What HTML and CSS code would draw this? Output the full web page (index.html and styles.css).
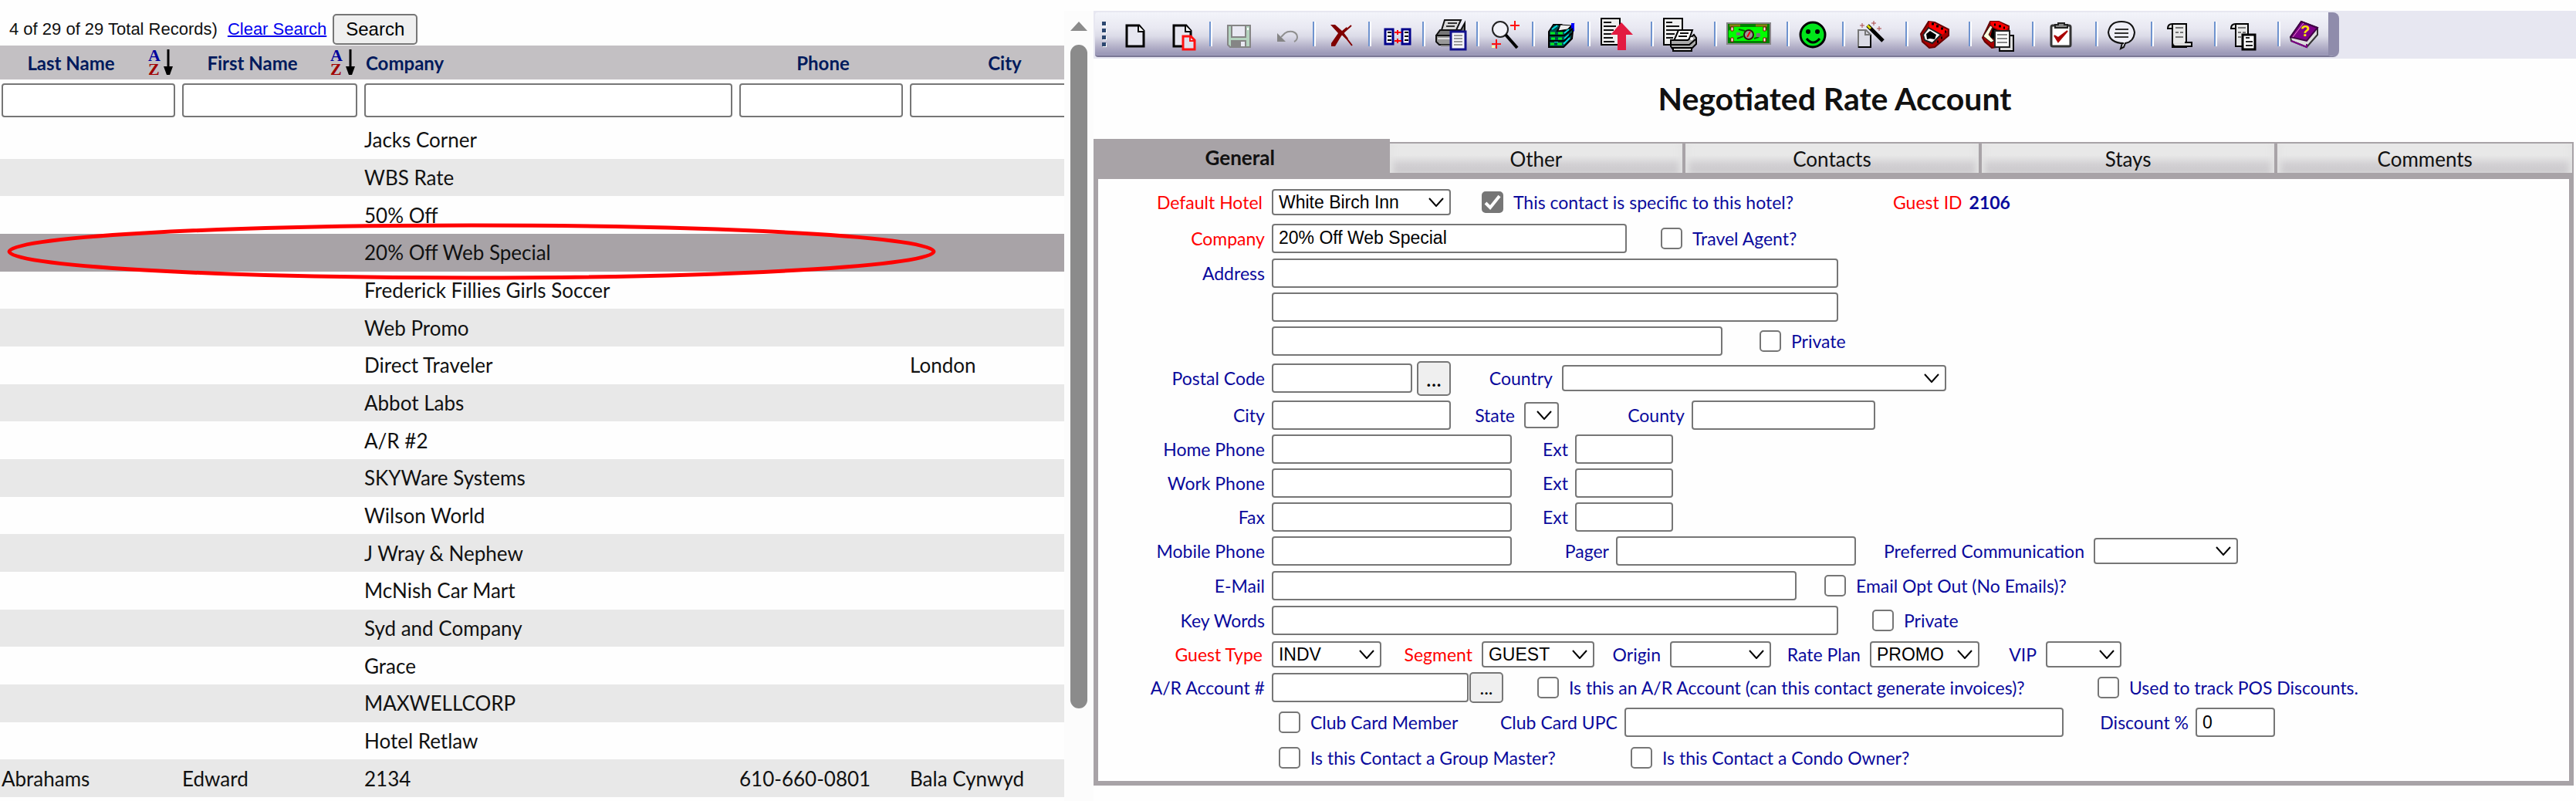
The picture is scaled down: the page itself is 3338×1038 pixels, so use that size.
FILE: index.html
```html
<!DOCTYPE html>
<html lang="en">
<head>
  <meta charset="UTF-8">
  <title>Negotiated Rate Account</title>
  <link rel="stylesheet" href="styles.css">
</head>
<body>

<!-- Search Results List -->
<section class="list-panel">
  <div class="list-main">
    <div class="list-top">
      <span>4 of 29 of 29 Total Records)</span>
      <a href="#">Clear Search</a>
      <button type="button" class="search-btn">Search</button>
    </div>
    <table class="results">
      <colgroup><col class="c-last"><col class="c-first"><col class="c-company"><col class="c-phone"><col class="c-city"></colgroup>
      <thead>
        <tr class="heads">
          <th><div class="sortable"><span>Last Name</span>
            <svg width="32" height="40" viewBox="0 -2 32 40"><text x="0" y="16" class="sort-letter sort-a">A</text><text x="0" y="34" class="sort-letter sort-z">Z</text><path d="M26 1v24" stroke="#000" stroke-width="3"/><path d="M20 23h12l-4 11h-4z"/></svg></div></th>
          <th><div class="sortable"><span>First Name</span>
            <svg width="32" height="40" viewBox="0 -2 32 40"><text x="0" y="16" class="sort-letter sort-a">A</text><text x="0" y="34" class="sort-letter sort-z">Z</text><path d="M26 1v24" stroke="#000" stroke-width="3"/><path d="M20 23h12l-4 11h-4z"/></svg></div></th>
          <th class="left">Company</th>
          <th>Phone</th>
          <th>City</th>
        </tr>
        <tr class="filters">
          <td><input type="text" aria-label="Filter last name"></td>
          <td><input type="text" aria-label="Filter first name"></td>
          <td><input type="text" aria-label="Filter company"></td>
          <td><input type="text" aria-label="Filter phone"></td>
          <td><input type="text" aria-label="Filter city"></td>
        </tr>
      </thead>
      <tbody>
        <tr><td></td><td></td><td>Jacks Corner</td><td></td><td></td></tr>
        <tr><td></td><td></td><td>WBS Rate</td><td></td><td></td></tr>
        <tr><td></td><td></td><td>50% Off</td><td></td><td></td></tr>
        <tr class="selected">
          <td class="marker-cell"><svg class="marker" width="1204" height="74" viewBox="0 0 1204 74"><ellipse cx="602" cy="37" rx="599" ry="34" fill="none" stroke="#f00" stroke-width="5"/></svg></td>
          <td></td><td>20% Off Web Special</td><td></td><td></td>
        </tr>
        <tr><td></td><td></td><td>Frederick Fillies Girls Soccer</td><td></td><td></td></tr>
        <tr><td></td><td></td><td>Web Promo</td><td></td><td></td></tr>
        <tr><td></td><td></td><td>Direct Traveler</td><td></td><td>London</td></tr>
        <tr><td></td><td></td><td>Abbot Labs</td><td></td><td></td></tr>
        <tr><td></td><td></td><td>A/R #2</td><td></td><td></td></tr>
        <tr><td></td><td></td><td>SKYWare Systems</td><td></td><td></td></tr>
        <tr><td></td><td></td><td>Wilson World</td><td></td><td></td></tr>
        <tr><td></td><td></td><td>J Wray &amp; Nephew</td><td></td><td></td></tr>
        <tr><td></td><td></td><td>McNish Car Mart</td><td></td><td></td></tr>
        <tr><td></td><td></td><td>Syd and Company</td><td></td><td></td></tr>
        <tr><td></td><td></td><td>Grace</td><td></td><td></td></tr>
        <tr><td></td><td></td><td>MAXWELLCORP</td><td></td><td></td></tr>
        <tr><td></td><td></td><td>Hotel Retlaw</td><td></td><td></td></tr>
        <tr><td>Abrahams</td><td>Edward</td><td>2134</td><td>610-660-0801</td><td>Bala Cynwyd</td></tr>
      </tbody>
    </table>
  </div>
  <div class="scrollbar">
    <div class="scroll-up"></div>
    <div class="scroll-thumb"></div>
  </div>
</section>

<!-- Contact Details -->
<main class="detail">

  <div class="toolbar-wrap">
    <div class="toolbar">
      <div class="grip"><i></i><i></i><i></i><i></i></div>
      <button type="button" class="tool" aria-label="New">
        <svg width="44" height="58" viewBox="0 0 44 58"><path d="M11 17h16l6 7v20H11z" fill="#e6e6f0" stroke="#000" stroke-width="3"/><path d="M26 17v8h8" fill="#fff" stroke="#000" stroke-width="2"/></svg>
      </button>
      <button type="button" class="tool narrow" aria-label="New copy">
        <svg width="44" height="58" viewBox="0 0 44 58"><path d="M8 17h16l6 7v20H8z" fill="#e6e6f0" stroke="#000" stroke-width="3"/><path d="M23 17v8h8" fill="#fff" stroke="#000" stroke-width="2"/><path d="M20 31h10l5 5v12H20z" fill="#e0e0ec" stroke="#f11" stroke-width="3"/><path d="M29 31v6h6" fill="none" stroke="#f11" stroke-width="2"/></svg>
      </button>
      <span class="sep"></span>
      <button type="button" class="tool" aria-label="Save" disabled>
        <svg width="44" height="58" viewBox="0 0 44 58"><path d="M8 17h29v28H11l-3-3z" fill="#b4d4bf" stroke="#858585" stroke-width="2"/><path d="M13 17h18v15H13z" fill="#e9e9f3" stroke="#858585" stroke-width="2"/><path d="M12 36h20v9H12z" fill="#858585"/><path d="M25 38h5v6h-5z" fill="#e9e9f3"/><path d="M33 20h2v3h-2z" fill="#fff"/></svg>
      </button>
      <button type="button" class="tool narrow" aria-label="Undo" disabled>
        <svg width="44" height="58" viewBox="0 0 44 58"><path d="M8 27v11h11z" fill="#858585"/><path d="M13 32l5-5q4-3 10-2q6 2 6 7q0 4-4 6" fill="none" stroke="#8f8f8f" stroke-width="2"/></svg>
      </button>
      <span class="sep"></span>
      <button type="button" class="tool short" aria-label="Delete">
        <svg width="44" height="58" viewBox="0 0 44 58"><path d="M10 17l9 8 9 9 7 9M34 17l-9 8-9 9-6 9" fill="none" stroke="#800000" stroke-width="2"/><path d="M7 16h6l9 8 6-5 1 2-5 5 6 8-2 1-6-6-9 15H8v-4l9-13z" fill="#800000"/></svg>
      </button>
      <span class="sep"></span>
      <button type="button" class="tool narrow" aria-label="Merge">
        <svg width="44" height="58" viewBox="0 0 44 58"><g fill="#fff" stroke="#00008b" stroke-width="3"><path d="M6 22h10v19H6zM28 22h10v19H28z"/></g><path d="M9 26h5M9 31h5M9 36h5M31 26h5M31 31h5M31 36h5" stroke="#000" stroke-width="2"/><path d="M18 26h9M22 23v6M18 37h9M22 34v6" stroke="#f00" stroke-width="2"/></svg>
      </button>
      <span class="sep"></span>
      <button type="button" class="tool narrow" aria-label="Print list">
        <svg width="44" height="58" viewBox="0 0 44 58"><path d="M13 10h21l-6 13H9z" fill="#d8d8d8" stroke="#111" stroke-width="2"/><path d="M17 14h12M15 18h11" stroke="#333" stroke-width="2"/><path d="M2 30l5-7h27l5-9v16l-8 7H2z" fill="#777" stroke="#111" stroke-width="2"/><path d="M2 30h20v12H6l-4-4z" fill="#999" stroke="#111" stroke-width="2"/><path d="M4 34h16" stroke="#ddd" stroke-width="2"/><path d="M8 43h14" stroke="#777" stroke-width="2"/><path d="M21 25h19v23H21z" fill="#f4f4f8" stroke="#12128c" stroke-width="3"/><path d="M25 30h11M25 34h11M25 38h11M25 42h11" stroke="#999" stroke-width="2"/></svg>
      </button>
      <span class="sep"></span>
      <button type="button" class="tool short" aria-label="Find">
        <svg width="44" height="58" viewBox="0 0 44 58"><circle cx="15" cy="22" r="10" fill="#f2f2f8" stroke="#222" stroke-width="2"/><path d="M22 29l15 17" stroke="#000" stroke-width="4"/><path d="M28 17h12M34 11v12M4 41h12M10 35v12" stroke="#f11" stroke-width="2"/><path d="M4 43h4v3H4z" fill="#ffa"/></svg>
      </button>
      <span class="sep"></span>
      <button type="button" class="tool short" aria-label="Accounts">
        <svg width="44" height="58" viewBox="0 0 44 58"><path d="M6 25l6-9h10l-5 8h12l9-8-2 18-11 11H6z" fill="#004d4d" stroke="#000" stroke-width="2"/><path d="M21 16l14 1-5 5-12 2z" fill="#eee" stroke="#000"/><path d="M35 14h4v11l-4-4z" fill="#00f"/><path d="M8 27h6M18 27h6M9 34h5M18 34h5M8 41h5M17 41h6" stroke="#0e2" stroke-width="3"/><path d="M10 22l7-5M26 27l6-5M26 34l6-5M25 41l8-8M14 30h4M13 38h5" stroke="#0dd" stroke-width="2"/><path d="M6 30h20l11-9M6 37h20l10-10" fill="none" stroke="#000" stroke-width="2"/></svg>
      </button>
      <span class="sep"></span>
      <button type="button" class="tool" aria-label="Post up">
        <svg width="44" height="58" viewBox="0 0 44 58"><path d="M2 8h24v34H2z" fill="#eee" stroke="#000" stroke-width="2"/><path d="M5 13h10M5 18h16M5 23h13M5 28h10M5 33h12M5 38h14" stroke="#111" stroke-width="2"/><path d="M28 13l15 16h-9v20H23V29h-9z" fill="#e31b41"/></svg>
      </button>
      <span class="sep"></span>
      <button type="button" class="tool" aria-label="Print">
        <svg width="44" height="58" viewBox="0 0 44 58"><path d="M1 8h24v34H1z" fill="#eee" stroke="#000" stroke-width="2"/><path d="M4 13h8M4 18h17M4 23h15M4 28h11M4 33h9" stroke="#111" stroke-width="2"/><path d="M20 23h18l-5 14H14z" fill="#fff" stroke="#000" stroke-width="2"/><path d="M22 27h11M20 31h11" stroke="#111" stroke-width="2"/><path d="M10 36h22l8-7 3 4v8l-6 6H12l-2-3z" fill="#aaa" stroke="#000" stroke-width="2"/><path d="M10 42h24l8-7" fill="none" stroke="#000" stroke-width="2"/><path d="M13 46h24v4H13z" fill="#ccc" stroke="#000" stroke-width="2"/><circle cx="37" cy="34" r="2" fill="#fff"/></svg>
      </button>
      <span class="sep"></span>
      <button type="button" class="tool money" aria-label="Payments">
        <svg width="58" height="58" viewBox="0 0 58 58"><path d="M1 14h56v27H1z" fill="#008000" stroke="#888" stroke-width="2"/><path d="M4 17h14M38 17h15" stroke="#8a7a10" stroke-width="3"/><path d="M10 19h37v18H10l-7-5v-8z" fill="#0f0"/><path d="M47 19l6 5v8l-6 5z" fill="#0f0"/><path d="M6 19h3v5H6zM48 19h3v5h-3zM6 33h3v5H6zM48 33h3v5h-3z" fill="#fff" stroke="#900"/><path d="M16 22l8 2M14 34l8-3M36 34l6-2" stroke="#060" stroke-width="2"/><path d="M13 26h5v4h-5zM39 27h5v5h-5z" fill="#777"/><circle cx="29" cy="29" r="6" fill="#999" stroke="#311" stroke-width="2"/><path d="M27 32l4-7" stroke="#e00" stroke-width="2"/></svg>
      </button>
      <span class="sep"></span>
      <button type="button" class="tool short" aria-label="Guest satisfaction">
        <svg width="44" height="58" viewBox="0 0 44 58"><circle cx="18" cy="29" r="16" fill="#00e51a" stroke="#000" stroke-width="3"/><circle cx="12" cy="25" r="3"/><circle cx="24" cy="25" r="3"/><path d="M10 34q8 10 17 0" fill="none" stroke="#000" stroke-width="3"/></svg>
      </button>
      <span class="sep"></span>
      <button type="button" class="tool" aria-label="Wizard">
        <svg width="44" height="58" viewBox="0 0 44 58"><path d="M5 23h10l6 6v16H5z" fill="#dcdce6" stroke="#777" stroke-width="2"/><path d="M5 45h16V29" fill="none" stroke="#000" stroke-width="2"/><path d="M14 23v6h7" fill="none" stroke="#777" stroke-width="2"/><path d="M17 17l20 20" stroke="#000" stroke-width="5"/><path d="M17 17l4 4" stroke="#dd0" stroke-width="3"/><path d="M10 14v6M7 17h6M25 11v6M22 14h6M32 18v6M29 21h6" stroke="#a44" stroke-width="1"/></svg>
      </button>
      <span class="sep"></span>
      <button type="button" class="tool" aria-label="Phone">
        <svg width="44" height="58" viewBox="0 0 44 58"><path d="M4 28L14 12l8 1 18 9v8L22 45l-7 1L6 38z" fill="#a00" stroke="#600" stroke-width="2"/><path d="M15 12l7 2 17 9-7 6-17-9z" fill="#f00"/><path d="M7 29l7-9 16 9-11 11-10-4z" fill="#fff" stroke="#222" stroke-width="2"/><path d="M11 28l5-4 8 5-2 6-6-1-4 1z"/><path d="M18 15h3M24 18h3M30 21h3M35 25h2M30 33h2M25 38h2" stroke="#000" stroke-width="3"/></svg>
      </button>
      <span class="sep"></span>
      <button type="button" class="tool" aria-label="Phone log">
        <svg width="44" height="58" viewBox="0 0 44 58"><path d="M2 33l10-21h11l13 6v8L20 45l-6 1-9-8z" fill="#a00" stroke="#600" stroke-width="2"/><path d="M12 12h11l13 7-6 6-16-7z" fill="#f00"/><path d="M3 31l9-14 3 2-5 10 7 8-4 2z" fill="#ffd" stroke="#222"/><path d="M15 20l6 3v14l-9-5z"/><path d="M17 16h2M23 18h3M29 20h2" stroke="#000" stroke-width="3"/><path d="M24 30h18v20H24z" fill="#ddd" stroke="#000" stroke-width="2"/><path d="M18 24h19v21H18z" fill="#fff" stroke="#222" stroke-width="2"/><path d="M21 29h13M21 34h13M21 39h13" stroke="#888" stroke-width="2"/></svg>
      </button>
      <span class="sep"></span>
      <button type="button" class="tool" aria-label="Tasks">
        <svg width="44" height="58" viewBox="0 0 44 58"><rect x="9" y="17" width="25" height="27" rx="2" fill="#fff" stroke="#333" stroke-width="3"/><path d="M18 14h8v2h4v4H14v-4h4z" fill="#888" stroke="#222" stroke-width="2"/><path d="M13 30l5 8 12-14-12 9z" fill="#a00" stroke="#a00" stroke-width="2"/></svg>
      </button>
      <span class="sep"></span>
      <button type="button" class="tool short" aria-label="Comments">
        <svg width="44" height="58" viewBox="0 0 44 58"><path d="M21 40q-18 0-20-14Q3 12 18 12t17 14q-1 12-12 14l-2 5-4 2 2-7" fill="#eeeef6" stroke="#111" stroke-width="2"/><path d="M10 22h17M9 27h18M9 32h18" stroke="#333" stroke-width="2"/></svg>
      </button>
      <span class="sep"></span>
      <button type="button" class="tool" aria-label="Script">
        <svg width="44" height="58" viewBox="0 0 44 58"><path d="M12 15q-6 0-6 6h6v24h18V15z" fill="#e8e8e8" stroke="#000" stroke-width="2"/><path d="M28 39h9v5H16q-3 0-4-4" fill="#ddd" stroke="#000" stroke-width="2"/><path d="M12 15v7" stroke="#000" stroke-width="2"/><path d="M16 20h10M16 26h4M22 26h4M16 32h10" stroke="#777" stroke-width="2"/></svg>
      </button>
      <span class="sep"></span>
      <button type="button" class="tool" aria-label="Script copy">
        <svg width="44" height="58" viewBox="0 0 44 58"><path d="M12 15q-6 0-6 6h6v23h16V15z" fill="#e8e8e8" stroke="#000" stroke-width="2"/><path d="M12 15v7" stroke="#000" stroke-width="2"/><path d="M15 20h10M15 26h4M21 26h4M15 32h4" stroke="#777" stroke-width="2"/><path d="M21 29h16v19H21z" fill="#fff" stroke="#000" stroke-width="3"/><path d="M25 33h5M25 38h9M25 43h9" stroke="#222" stroke-width="2"/></svg>
      </button>
      <span class="sep"></span>
      <button type="button" class="tool last" aria-label="Help">
        <svg width="44" height="58" viewBox="0 0 44 58"><path d="M1 32L15 12l21 8v9L22 45 2 37z" fill="#ddd" stroke="#333" stroke-width="2"/><path d="M1 32L15 12l21 8-14 17z" fill="#7d0087" stroke="#400045" stroke-width="2"/><path d="M4 32l14-18" stroke="#e8c" stroke-width="1"/><path d="M2 37l20 8v-4" fill="none" stroke="#7d0087" stroke-width="2"/><text x="14" y="31" class="help-mark">?</text></svg>
      </button>
    </div>
  </div>

  <h1>Negotiated Rate Account</h1>

  <nav class="tabs">
    <button type="button" class="active">General</button>
    <button type="button">Other</button>
    <button type="button">Contacts</button>
    <button type="button">Stays</button>
    <button type="button">Comments</button>
  </nav>

  <form class="panel">
    <div class="row tall">
      <label class="first required pad" for="hotel">Default Hotel</label>
      <select id="hotel" class="w-232"><option>White Birch Inn</option></select>
      <input type="checkbox" id="specific" class="gap-40" checked><label for="specific" class="check-label w-505">This contact is specific to this hotel?</label>
      <span class="required">Guest ID</span><strong>2106</strong>
    </div>
    <div class="row tall">
      <label class="first required" for="company">Company</label>
      <input type="text" id="company" class="w-460" value="20% Off Web Special">
      <input type="checkbox" id="agent" class="gap-44"><label for="agent" class="check-label">Travel Agent?</label>
    </div>
    <div class="row">
      <label class="first" for="address1">Address</label>
      <input type="text" id="address1" class="w-734">
    </div>
    <div class="row">
      <span class="first"></span>
      <input type="text" aria-label="Address line 2" class="w-734">
    </div>
    <div class="row">
      <span class="first"></span>
      <input type="text" aria-label="Address line 3" class="w-584">
      <input type="checkbox" id="private1" class="gap-48"><label for="private1" class="check-label">Private</label>
    </div>
    <div class="row postal">
      <label class="first" for="postal">Postal Code</label>
      <input type="text" id="postal" class="w-182">
      <button type="button" class="more big">...</button>
      <label class="l-144 pad" for="country">Country</label>
      <select id="country" class="w-498"></select>
    </div>
    <div class="row">
      <label class="first" for="city">City</label>
      <input type="text" id="city" class="w-232">
      <label class="l-95 pad" for="state">State</label>
      <select id="state" class="w-45"></select>
      <label class="l-172" for="county">County</label>
      <input type="text" id="county" class="w-238">
    </div>
    <div class="row">
      <label class="first" for="home">Home Phone</label>
      <input type="text" id="home" class="w-311">
      <label class="l-82" for="ext1">Ext</label>
      <input type="text" id="ext1" class="w-127">
    </div>
    <div class="row">
      <label class="first" for="work">Work Phone</label>
      <input type="text" id="work" class="w-311">
      <label class="l-82" for="ext2">Ext</label>
      <input type="text" id="ext2" class="w-127">
    </div>
    <div class="row">
      <label class="first" for="fax">Fax</label>
      <input type="text" id="fax" class="w-311">
      <label class="l-82" for="ext3">Ext</label>
      <input type="text" id="ext3" class="w-127">
    </div>
    <div class="row tight">
      <label class="first" for="mobile">Mobile Phone</label>
      <input type="text" id="mobile" class="w-311">
      <label class="l-135" for="pager">Pager</label>
      <input type="text" id="pager" class="w-311">
      <label class="l-308 pad" for="preferred">Preferred Communication</label>
      <select id="preferred" class="w-187"></select>
    </div>
    <div class="row tall">
      <label class="first" for="email">E-Mail</label>
      <input type="text" id="email" class="w-680">
      <input type="checkbox" id="optout" class="gap-36"><label for="optout" class="check-label">Email Opt Out (No Emails)?</label>
    </div>
    <div class="row">
      <label class="first" for="keywords">Key Words</label>
      <input type="text" id="keywords" class="w-734">
      <input type="checkbox" id="private2" class="gap-44"><label for="private2" class="check-label">Private</label>
    </div>
    <div class="row tight">
      <label class="first required pad" for="guesttype">Guest Type</label>
      <select id="guesttype" class="w-142"><option>INDV</option></select>
      <label class="l-130 required pad" for="segment">Segment</label>
      <select id="segment" class="w-146"><option>GUEST</option></select>
      <label class="l-98 pad" for="origin">Origin</label>
      <select id="origin" class="w-131"></select>
      <label class="l-128 pad" for="rateplan">Rate Plan</label>
      <select id="rateplan" class="w-142"><option>PROMO</option></select>
      <label class="l-86 pad" for="vip">VIP</label>
      <select id="vip" class="w-98"></select>
    </div>
    <div class="row tight">
      <label class="first" for="araccount">A/R Account #</label>
      <input type="text" id="araccount" class="w-255">
      <button type="button" class="more">...</button>
      <input type="checkbox" id="isar" class="gap-44"><label for="isar" class="check-label w-698">Is this an A/R Account (can this contact generate invoices)?</label>
      <input type="checkbox" id="pos"><label for="pos" class="check-label">Used to track POS Discounts.</label>
    </div>
    <div class="row upc">
      <span class="first"></span>
      <input type="checkbox" id="club" class="gap-9"><label for="club" class="check-label w-238">Club Card Member</label>
      <label class="l-182" for="upc">Club Card UPC</label>
      <input type="text" id="upc" class="w-569">
      <label class="l-171" for="discount">Discount %</label>
      <input type="text" id="discount" class="w-103" value="0">
    </div>
    <div class="row">
      <span class="first"></span>
      <input type="checkbox" id="master" class="gap-9"><label for="master" class="check-label w-428">Is this Contact a Group Master?</label>
      <input type="checkbox" id="condo"><label for="condo" class="check-label">Is this Contact a Condo Owner?</label>
    </div>
  </form>

</main>

</body>
</html>
```
FILE: styles.css
```css
* { box-sizing: border-box; margin: 0; padding: 0; }
body { display: flex; min-height: 100vh; overflow: hidden; background: #fefefe; color: #111; font-family: Lato, "Liberation Sans", sans-serif; font-size: 26px; }
svg { display: block; }
button { font-family: inherit; cursor: pointer; }

input[type="text"], select {
  height: 38px; flex: none; padding: 0 7px; background-color: #fff;
  border: 2px solid #767676; border-radius: 4px;
  font-family: "Liberation Sans", Arial, sans-serif; font-size: 23px; color: #000;
}
select {
  height: 34px; appearance: none;
  background-image: url('data:image/svg+xml,<svg xmlns="http://www.w3.org/2000/svg" width="20" height="12"><path d="M1 1l9 10 9-10" fill="none" stroke="black" stroke-width="2"/></svg>');
  background-repeat: no-repeat; background-position: right 7px center;
}
input[type="checkbox"] {
  appearance: none; width: 28px; height: 28px; flex: none;
  background: #fff; border: 2px solid #767676; border-radius: 5px;
}
input[type="checkbox"]:checked {
  background: #767676 url('data:image/svg+xml,<svg xmlns="http://www.w3.org/2000/svg" width="24" height="24"><path d="M3 13l6 6L21 4" fill="none" stroke="white" stroke-width="4"/></svg>') center no-repeat;
}

/* Left list */
.list-panel { display: flex; width: 42.45%; flex: none; }
.list-main { flex: 1; min-width: 0; overflow: hidden; }
.list-top { display: flex; align-items: center; height: 59px; padding: 17px 0 0 12px; font-family: "Liberation Sans", Arial, sans-serif; font-size: 22px; }
.list-top a { margin-left: 13px; color: #00e; text-decoration-thickness: 2px; }
.search-btn { height: 40px; margin-left: 8px; padding: 0 15px; background: #efefef; border: 2px solid #767676; border-radius: 5px; font-size: 24px; }

.results { width: 1427px; height: calc(100vh - 64px); table-layout: fixed; border-collapse: collapse; }
.c-last { width: 234px; }
.c-first { width: 236px; }
.c-company { width: 486px; }
.c-phone { width: 221px; }
.c-city { width: 250px; }
.heads { height: 44px; background: #c3c0c3; }
.filters { height: 54px; }
th { color: #001a5c; font-size: 24px; font-weight: bold; }
th.left { text-align: left; padding-left: 4px; }
.sortable { display: flex; align-items: center; }
.sortable span { flex: 1; }
.sortable svg { margin: 0 10px 0 8px; overflow: visible; }
.sort-letter { font: bold 22px "Liberation Serif", serif; }
.sort-a { fill: #00009c; }
.sort-z { fill: #a00000; }
.filters input { display: block; width: 100%; height: 44px; }
.filters td { padding: 0 7px 0 2px; }
tbody tr { height: 48px; }
tbody td { padding-left: 2px; white-space: nowrap; }
tbody tr:nth-child(even) { background: #e8e8e8; }
tbody tr.selected { background: #a8a3a7; }
.marker-cell { position: relative; }
.marker { position: absolute; z-index: 2; left: 9px; top: -14px; }

.scrollbar { width: 38px; margin-top: 14px; background: #fcfcfc; }
.scroll-up { width: 0; height: 0; margin: 14px 8px 18px; border: 11px solid transparent; border-top: 0; border-bottom: 12px solid #8b8b8b; }
.scroll-thumb { width: 22px; height: 84%; margin-left: 8px; border-radius: 11px; background: #8b8b8b; }

/* Right side */
.detail { flex: 1; min-width: 0; padding-top: 14px; }
.toolbar-wrap { display: flex; padding: 2px; background: #e7e7f1; }
.toolbar {
  display: flex; align-items: center; height: 58px;
  background: linear-gradient(#f3f4fa, #e9e9f2 35%, #dcdce8 55%, #b3b0c8 80%, #9c99b8 95%);
  border-right: 14px solid #8f8cab; border-bottom: 2px solid #7a7795; border-radius: 4px 8px 8px 4px;
}
.grip { display: flex; flex-direction: column; gap: 4px; width: 18px; padding-left: 9px; }
.grip i { width: 5px; height: 5px; background: #2c4770; box-shadow: 1px 1px #fff; }
.tool { width: 78px; height: 58px; margin-top: 2px; padding-left: 12px; background: none; border: 0; }
.tool:first-of-type, .tool:disabled { width: 64px; }
.tool.short { width: 68px; }
.tool.narrow { width: 66px; }
.tool.money { width: 90px; }
.tool.last { width: 62px; }
.sep { width: 4px; height: 32px; background: #6e93cf; border-right: 2px solid #fff; }
.help-mark { font: bold 20px "Liberation Sans", sans-serif; fill: #ffe600; }

h1 { height: 104px; line-height: 104px; text-align: center; font-size: 41px; color: #111; }

.tabs { display: grid; grid-template-columns: repeat(5, 1fr); align-items: end; margin-right: 3px; background: linear-gradient(transparent 4px, #a8a3a7 4px); }
.tabs button {
  height: 46px; padding-top: 2px; font-size: 26px; color: #111;
  background: linear-gradient(#e8e8e8 40%, #d2d0d3 72%, #cbc9cc);
  border: 0 solid #a8a3a7; border-width: 2px 4px 6px 0;
  box-shadow: inset 8px 0 8px -4px #e4e4e4, inset -8px 0 8px -4px #e4e4e4;
  background-clip: padding-box;
}
.tabs button.active { height: 50px; background: #a8a3a7; box-shadow: none; font-weight: bold; }
.tabs button:last-child { border-right-width: 2px; }

.panel { margin-right: 3px; padding: 6px 0 8px; border: 6px solid #a8a3a7; border-top-width: 2px; color: #0a0a9c; font-size: 23px; }
.row { display: flex; align-items: center; height: 44px; white-space: nowrap; }
.row.tall { height: 47px; }
.row.postal { height: 52px; }
.row.tight { height: 43px; }
.row.upc { height: 48px; }
.row label { flex: none; text-align: right; padding-right: 9px; }
.row label.pad { padding-right: 12px; }
.row .first { width: 225px; flex: none; }
.row .check-label { padding: 0 0 0 13px; text-align: left; }
.row .required { color: #f00; }
.row strong { margin-left: 9px; }

.more { width: 44px; height: 40px; margin-left: 1px; background: #efefef; border: 2px solid #767676; border-radius: 5px; font-size: 24px; }
.more.big { height: 45px; margin-left: 6px; font-size: 28px; }

/* field widths */
.w-45 { width: 45px; }
.w-98 { width: 98px; }
.w-103 { width: 103px; }
.w-127 { width: 127px; }
.w-131 { width: 131px; }
.w-142 { width: 142px; }
.w-146 { width: 146px; }
.w-182 { width: 182px; }
.w-187 { width: 187px; }
.w-232 { width: 232px; }
.w-238 { width: 238px; }
.w-255 { width: 255px; }
.w-311 { width: 311px; }
.w-428 { width: 428px; }
.w-460 { width: 460px; }
.w-498 { width: 498px; }
.w-505 { width: 505px; }
.w-569 { width: 569px; }
.w-584 { width: 584px; }
.w-680 { width: 680px; }
.w-698 { width: 698px; }
.w-734 { width: 734px; }

/* label widths */
.l-82 { width: 82px; }
.l-86 { width: 86px; }
.l-95 { width: 95px; }
.l-98 { width: 98px; }
.l-128 { width: 128px; }
.l-130 { width: 130px; }
.l-135 { width: 135px; }
.l-144 { width: 144px; }
.l-171 { width: 171px; }
.l-172 { width: 172px; }
.l-182 { width: 182px; }
.l-308 { width: 308px; }

.gap-9 { margin-left: 9px; }
.gap-36 { margin-left: 36px; }
.gap-40 { margin-left: 40px; }
.gap-44 { margin-left: 44px; }
.gap-48 { margin-left: 48px; }
```
